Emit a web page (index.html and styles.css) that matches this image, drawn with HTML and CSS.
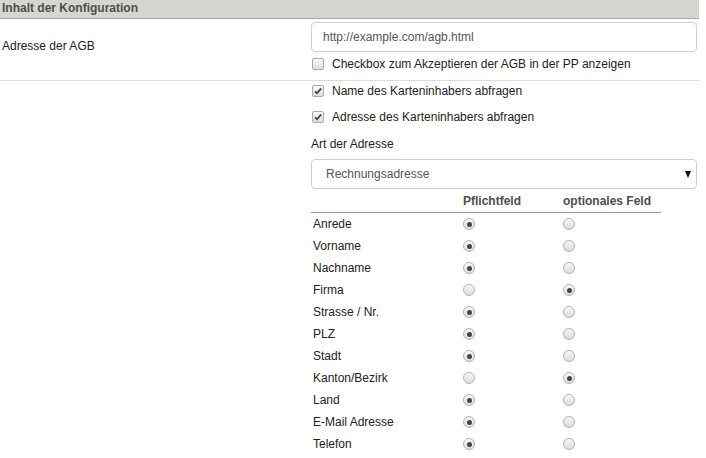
FILE: index.html
```html
<!DOCTYPE html>
<html>
<head>
<meta charset="utf-8">
<link rel="stylesheet" href="styles.css">
</head>
<body>
<div class="page">
  <div class="section-title">Inhalt der Konfiguration</div>

  <div class="row first">
    <div class="label">Adresse der AGB</div>
    <div class="field">
      <div class="input">http://example.com/agb.html</div>
      <div class="check"><span class="box"></span><span>Checkbox zum Akzeptieren der AGB in der PP anzeigen</span></div>
    </div>
  </div>

  <div class="row second">
    <div class="label"></div>
    <div class="field">
      <div class="check"><span class="box checked"><svg viewBox="0 0 12 12" width="12" height="12"><path d="M3 6.3 L5 8.3 L9.2 3.4" fill="none" stroke="#444" stroke-width="1.8"/></svg></span><span>Name des Karteninhabers abfragen</span></div>
      <div class="check"><span class="box checked"><svg viewBox="0 0 12 12" width="12" height="12"><path d="M3 6.3 L5 8.3 L9.2 3.4" fill="none" stroke="#444" stroke-width="1.8"/></svg></span><span>Adresse des Karteninhabers abfragen</span></div>
      <div class="sublabel">Art der Adresse</div>
      <div class="select"><span>Rechnungsadresse</span><span class="arrow"></span></div>
      <div class="table">
        <div class="thead">
          <div class="c1"></div><div class="c2">Pflichtfeld</div><div class="c3">optionales Feld</div>
        </div>
        <div class="tr"><div class="c1">Anrede</div><div class="c2"><span class="radio on"></span></div><div class="c3"><span class="radio"></span></div></div>
        <div class="tr"><div class="c1">Vorname</div><div class="c2"><span class="radio on"></span></div><div class="c3"><span class="radio"></span></div></div>
        <div class="tr"><div class="c1">Nachname</div><div class="c2"><span class="radio on"></span></div><div class="c3"><span class="radio"></span></div></div>
        <div class="tr"><div class="c1">Firma</div><div class="c2"><span class="radio"></span></div><div class="c3"><span class="radio on"></span></div></div>
        <div class="tr"><div class="c1">Strasse / Nr.</div><div class="c2"><span class="radio on"></span></div><div class="c3"><span class="radio"></span></div></div>
        <div class="tr"><div class="c1">PLZ</div><div class="c2"><span class="radio on"></span></div><div class="c3"><span class="radio"></span></div></div>
        <div class="tr"><div class="c1">Stadt</div><div class="c2"><span class="radio on"></span></div><div class="c3"><span class="radio"></span></div></div>
        <div class="tr"><div class="c1">Kanton/Bezirk</div><div class="c2"><span class="radio"></span></div><div class="c3"><span class="radio on"></span></div></div>
        <div class="tr"><div class="c1">Land</div><div class="c2"><span class="radio on"></span></div><div class="c3"><span class="radio"></span></div></div>
        <div class="tr"><div class="c1">E-Mail Adresse</div><div class="c2"><span class="radio on"></span></div><div class="c3"><span class="radio"></span></div></div>
        <div class="tr"><div class="c1">Telefon</div><div class="c2"><span class="radio on"></span></div><div class="c3"><span class="radio"></span></div></div>
      </div>
    </div>
  </div>
</div>
</body>
</html>
```
FILE: styles.css
```css
html, body {
  margin: 0;
  padding: 0;
  background: #fff;
}
body {
  font-family: "Liberation Sans", Arial, sans-serif;
  font-size: 12px;
  color: #222;
}
.page {
  width: 699px;
}
.section-title {
  height: 18px;
  line-height: 17px;
  background: #d6d6d1;
  border-bottom: 1px solid #a8a8a4;
  font-weight: bold;
  color: #4d4d4d;
  padding-left: 2px;
}
.row {
  display: grid;
  grid-template-columns: 311px 386px;
}
.row.first {
  padding-top: 3px;
  padding-bottom: 8px;
  border-bottom: 1px solid #dadada;
}
.label {
  padding-left: 2px;
  padding-top: 17px;
}
.field {
  display: flex;
  flex-direction: column;
}
.input {
  box-sizing: border-box;
  height: 30px;
  border: 1px solid #cfcfcf;
  border-radius: 4px;
  padding-left: 11px;
  line-height: 28px;
  color: #555;
}
.check {
  display: flex;
  align-items: center;
  height: 16px;
  gap: 8px;
  padding-left: 1px;
}
.row.first .check {
  margin-top: 4px;
}
.row.second .check {
  margin-top: 2px;
}
.row.second .check + .check {
  margin-top: 10px;
}
.box {
  box-sizing: border-box;
  width: 12px;
  height: 12px;
  border: 1px solid #a9a9a9;
  border-radius: 2px;
  background: linear-gradient(#fbfbfb, #dcdcdc);
  position: relative;
  flex: none;
}
.box svg {
  position: absolute;
  left: -1px;
  top: -1px;
}
.sublabel {
  margin-top: 11px;
  height: 16px;
  line-height: 16px;
}
.select {
  box-sizing: border-box;
  margin-top: 7px;
  height: 30px;
  border: 1px solid #cfcfcf;
  border-radius: 4px;
  display: flex;
  align-items: center;
  justify-content: space-between;
  padding-left: 14px;
  padding-right: 5px;
  color: #555;
}
.arrow {
  width: 0;
  height: 0;
  border-left: 3.5px solid transparent;
  border-right: 3.5px solid transparent;
  border-top: 7px solid #111;
}
.table {
  width: 350px;
  display: flex;
  flex-direction: column;
}
.thead, .tr {
  display: grid;
  grid-template-columns: 150px 100px 100px;
  align-items: center;
}
.thead {
  height: 24px;
  box-sizing: border-box;
  border-bottom: 1px solid #9a9a9a;
  font-weight: bold;
  color: #4d4d4d;
}
.tr {
  height: 22px;
}
.c1, .c2, .c3 {
  padding-left: 2px;
  display: flex;
  align-items: center;
}
.radio {
  box-sizing: border-box;
  width: 12px;
  height: 12px;
  border-radius: 50%;
  border: 1px solid #b3b3b3;
  background: linear-gradient(#f7f7f7, #dcdcdc);
  display: flex;
  align-items: center;
  justify-content: center;
}
.radio.on::after {
  content: "";
  width: 5px;
  height: 5px;
  border-radius: 50%;
  background: #444;
}
```
